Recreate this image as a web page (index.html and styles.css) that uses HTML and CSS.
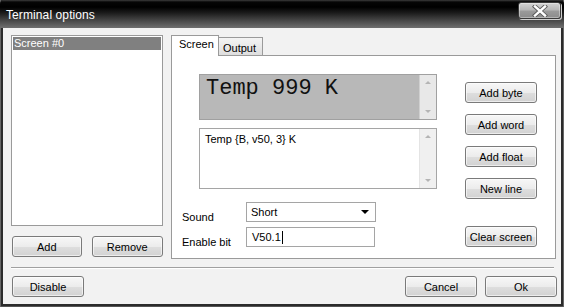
FILE: index.html
```html
<!DOCTYPE html>
<html>
<head>
<meta charset="utf-8">
<link rel="stylesheet" href="styles.css">
</head>
<body>
<div class="window">
  <div class="titlebar">
    <span class="title">Terminal options</span>
    <div class="close">
      <svg width="20" height="12" viewBox="0 0 20 12">
        <path d="M5 1.5 L15 10.5 M15 1.5 L5 10.5" stroke="#5a5a5a" stroke-width="4.2" stroke-linecap="square"/>
        <path d="M5 1.5 L15 10.5 M15 1.5 L5 10.5" stroke="#ffffff" stroke-width="2.4" stroke-linecap="square"/>
      </svg>
    </div>
  </div>
  <div class="client">
    <div class="main">
      <div class="leftcol">
        <div class="listbox">
          <div class="item selected">Screen #0</div>
        </div>
        <div class="leftbtns">
          <button class="btn w70">Add</button>
          <button class="btn w72">Remove</button>
        </div>
      </div>
      <div class="tabs">
        <div class="tabstrip">
          <div class="tab active">Screen</div>
          <div class="tab">Output</div>
        </div>
        <div class="panel">
          <div class="toprow">
            <div class="editors">
              <div class="display">
                <span class="lcd">Temp 999 K</span>
                <div class="vscroll dark"><span class="arr up"></span><span class="arr down"></span></div>
              </div>
              <div class="memo">
                <span class="memotext">Temp {B, v50, 3} K</span>
                <div class="vscroll"><span class="arr up"></span><span class="arr down"></span></div>
              </div>
            </div>
            <div class="sidebtns">
              <button class="btn w72">Add byte</button>
              <button class="btn w72">Add word</button>
              <button class="btn w72">Add float</button>
              <button class="btn w72">New line</button>
            </div>
          </div>
          <div class="bottomrow">
            <div class="form">
              <div class="frow">
                <span class="lbl">Sound</span>
                <div class="combo"><span>Short</span><span class="drop"></span></div>
              </div>
              <div class="frow">
                <span class="lbl">Enable bit</span>
                <div class="edit"><span>V50.1</span><span class="caret"></span></div>
              </div>
            </div>
            <button class="btn w72 clear">Clear screen</button>
          </div>
        </div>
      </div>
    </div>
    <div class="sep"></div>
    <div class="footer">
      <button class="btn w72">Disable</button>
      <div class="right">
        <button class="btn w72">Cancel</button>
        <button class="btn w72">Ok</button>
      </div>
    </div>
  </div>
</div>
</body>
</html>
```
FILE: styles.css
```css
* { box-sizing: border-box; }
html, body { margin: 0; padding: 0; background: #ffffff; }
body { font-family: "Liberation Sans", Arial, sans-serif; font-size: 11px; color: #000; }

.window {
  width: 564px;
  height: 307px;
  background: #2b2b2b;
  box-shadow: inset 1px 0 0 #666, inset -1px 0 0 #666, inset 0 -1px 0 #555;
  display: flex;
  flex-direction: column;
}

.titlebar {
  height: 28px;
  display: flex;
  align-items: flex-start;
  justify-content: space-between;
  background: linear-gradient(to bottom, #3d3d3d 0px, #060606 2px, #000 7px, #1c1c1c 13px, #4a4a4a 21px, #6a6a6a 27px, #6e6e6e 28px);
  border-radius: 4px 4px 0 0;
}
.title {
  color: #fff;
  font-size: 12px;
  margin: 8px 0 0 6px;
  letter-spacing: 0.1px;
}
.close {
  width: 43px;
  height: 17px;
  margin: 2px 3px 0 0;
  border: 1px solid #3a3a3a;
  border-radius: 3px;
  background: linear-gradient(to bottom, #d4d4d4 0, #b8b8b8 45%, #9a9a9a 55%, #8c8c8c 100%);
  box-shadow: inset 0 0 0 1px rgba(255,255,255,0.35), 1px 1px 0 #cfcfcf;
  display: flex;
  align-items: center;
  justify-content: center;
}

.client {
  margin: 0 3px 3px 3px;
  flex: 1;
  background: #f2f2f2;
  padding-top: 7px;
  display: flex;
  flex-direction: column;
}

.main { display: flex; height: 224px; }
.leftcol { margin-left: 8px; width: 152px; display: flex; flex-direction: column; }
.listbox {
  height: 191px;
  background: #fff;
  border: 1px solid #9a9a9a;
  padding: 1px;
}
.item { height: 13px; line-height: 13px; padding-left: 1px; }
.item.selected { background: #808080; color: #fff; }
.leftbtns { display: flex; gap: 10px; margin: 10px 0 0 1px; }

.btn {
  height: 21px;
  border: 1px solid #7a7a7a;
  border-radius: 3px;
  background: linear-gradient(to bottom, #f7f7f7 0, #ececec 50%, #dedede 51%, #d2d2d2 100%);
  box-shadow: inset 0 0 0 1px rgba(255,255,255,0.6);
  font-family: "Liberation Sans", Arial, sans-serif;
  font-size: 11px;
  color: #000;
  padding: 0;
  text-align: center;
}
.w70 { width: 70px; }
.w72 { width: 72px; }

.tabs { margin-left: 8px; width: 385px; display: flex; flex-direction: column; }
.tabstrip { display: flex; align-items: flex-end; height: 20px; }
.tab {
  height: 18px;
  padding: 0 5px;
  border: 1px solid #9a9a9a;
  border-bottom: none;
  border-left: none;
  background: linear-gradient(to bottom, #f4f4f4, #dedede);
  line-height: 18px;
  font-size: 11px;
}
.tab.active {
  height: 21px;
  margin-bottom: -1px;
  background: #fff;
  border-left: 1px solid #9a9a9a;
  width: 48px;
  padding: 0 0 0 7px;
  line-height: 17px;
  position: relative;
  z-index: 1;
}
.tab:not(.active) { width: 44px; padding-left: 4px; line-height: 20px; }

.panel {
  height: 205px;
  background: #fff;
  border: 1px solid #9a9a9a;
  padding: 18px 18px 0 10px;
  display: flex;
  flex-direction: column;
}
.toprow { display: flex; justify-content: space-between; align-items: flex-start; height: 125px; }
.editors { margin-left: 17px; width: 238px; display: flex; flex-direction: column; gap: 8px; }
.display {
  height: 46px;
  background: #b8b8b8;
  border: 1px solid #a0a0a0;
  display: flex;
  justify-content: space-between;
}
.lcd {
  font-family: "Liberation Mono", "Courier New", monospace;
  font-size: 22px;
  line-height: 22px;
  margin: 3px 0 0 6px;
  color: #111;
}
.memo {
  height: 61px;
  background: #fff;
  border: 1px solid #a5a5a5;
  display: flex;
  justify-content: space-between;
}
.memotext { margin: 4px 0 0 5px; line-height: 13px; }
.vscroll {
  width: 17px;
  background: #f0f0f0;
  border-left: 1px solid #e4e4e4;
  display: flex;
  flex-direction: column;
  justify-content: space-between;
  align-items: center;
  padding: 6px 0 6px;
}
.vscroll.dark { background: #e8e8e8; border-left: 1px solid #d0d0d0; }
.arr { width: 0; height: 0; border-left: 3px solid transparent; border-right: 3px solid transparent; }
.arr.up { border-bottom: 3px solid #b4b4b4; }
.arr.down { border-top: 3px solid #b4b4b4; }

.sidebtns { margin-top: 8px; display: flex; flex-direction: column; gap: 11px; }

.bottomrow { display: flex; justify-content: space-between; align-items: flex-start; margin-top: 3px; }
.form { display: flex; flex-direction: column; gap: 3px; }
.frow { display: flex; align-items: flex-start; }
.lbl { width: 64px; padding-top: 9px; line-height: 13px; }
.combo {
  width: 130px;
  height: 20px;
  border: 1px solid #a5a5a5;
  background: #fff;
  display: flex;
  align-items: center;
  justify-content: space-between;
  padding: 0 6px 0 4px;
}
.drop { width: 0; height: 0; border-left: 4px solid transparent; border-right: 4px solid transparent; border-top: 4px solid #000; }
.edit {
  width: 129px;
  height: 20px;
  border: 1px solid #a5a5a5;
  background: #fff;
  display: flex;
  align-items: center;
  padding-left: 5px;
}
.caret { width: 1px; height: 13px; background: #000; margin-left: 1px; }
.clear { margin-top: 24px; }

.sep { margin: 8px 7px 0 8px; height: 1px; background: #a0a0a0; box-shadow: 0 1px 0 #fff; }
.footer { margin-top: 8px; display: flex; justify-content: space-between; padding: 0 4px 0 9px; }
.right { display: flex; gap: 8px; }
```
